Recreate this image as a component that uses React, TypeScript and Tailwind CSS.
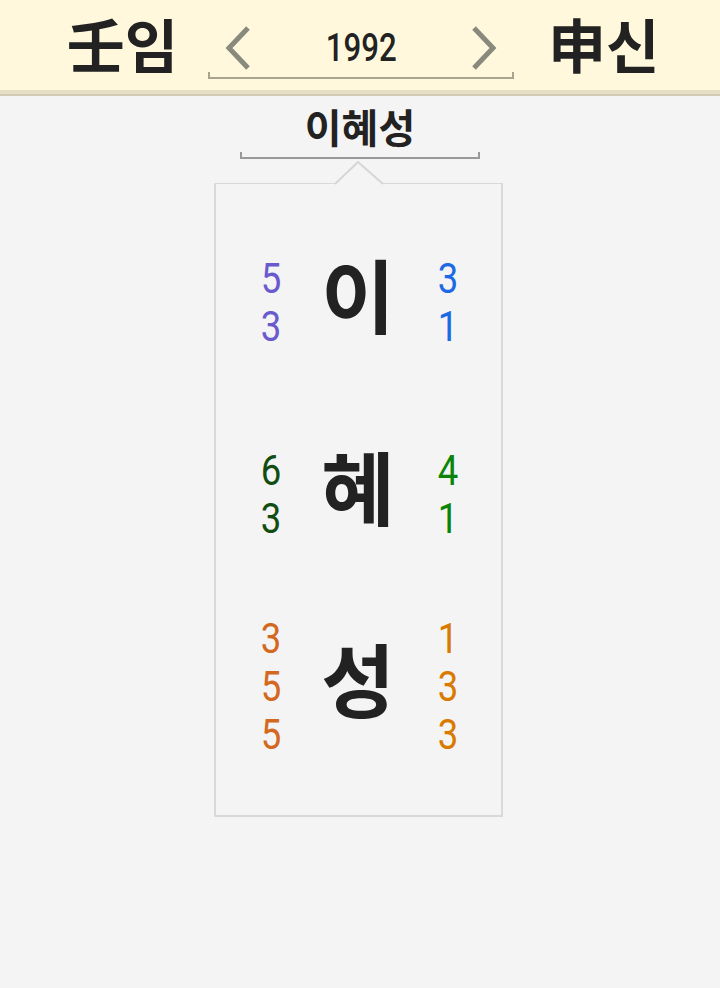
import React from "react";

const KR = { fontFamily: '"Noto Sans CJK KR", "Noto Sans", sans-serif' };
const NUM = { fontFamily: '"Roboto", "Noto Sans", sans-serif' };

// 이름 글자별 획수 (왼쪽 / 오른쪽)
const rows = [
  { ch: "이", left: ["5", "3"], right: ["3", "1"], lc: "text-[#6a5acd]", rc: "text-[#1c69e4]" },
  { ch: "혜", left: ["6", "3"], right: ["4", "1"], lc: "text-[#114d11]", rc: "text-[#0a850a]" },
  { ch: "성", left: ["3", "5", "5"], right: ["1", "3", "3"], lc: "text-[#d2691e]", rc: "text-[#d97a00]" },
];

function Chevron({ dir }: { dir: "left" | "right" }) {
  return (
    <svg width="26" height="44" viewBox="0 0 26 44">
      <polyline
        points={dir === "left" ? "23,2 4,22 23,42" : "3,2 22,22 3,42"}
        fill="none"
        stroke="#8a8a7c"
        strokeWidth="5"
      />
    </svg>
  );
}

export default function App() {
  return (
    <div className="min-h-[988px] bg-[#f4f4f4]" style={KR}>
      {/* 상단: 연도 선택 */}
      <header className="bg-[#fff8dc] border-b-[4px] border-[#e6dfc6]">
        <div className="h-[90px] flex items-center justify-center">
          <div className="text-[58px] font-bold text-[#222] leading-none pb-[4px] ml-[6px]">壬임</div>
          <div className="w-[306px] ml-[30px] mr-[34px] flex flex-col pt-[12px]">
            <div className="flex items-center justify-between px-[17px] h-[48px]">
              <Chevron dir="left" />
              <span className="inline-block scale-x-[0.82] text-[38px] font-medium text-[#222] leading-none" style={NUM}>
                1992
              </span>
              <Chevron dir="right" />
            </div>
            <div className="h-[7px] border-x-2 border-b-2 border-[#a8a48e]" />
          </div>
          <div className="text-[58px] font-bold text-[#222] leading-none pb-[4px]">申신</div>
        </div>
      </header>
      <div className="h-[2px] bg-[#d3ccb4]" />

      {/* 이름 */}
      <div className="flex flex-col items-center pt-[4px]">
        <div className="text-[40px] font-bold text-[#222] leading-[52px]">이혜성</div>
        <div className="w-[240px] h-[7px] border-x-2 border-b-2 border-[#999]" />

        {/* 획수 박스 */}
        <div className="relative mt-[24px] mr-[3px] w-[289px] border-2 border-t border-[#d9d9d9] pt-[22px] pb-[33px]">
          <svg
            className="absolute left-[117px] -top-[23px]"
            width="52"
            height="24"
            viewBox="0 0 52 24"
          >
            <polygon points="2,23 25,1 50,23" fill="#f4f4f4" />
            <polyline points="2,23 25,1 50,23" fill="none" stroke="#d6d6d6" strokeWidth="2" />
          </svg>
          {rows.map((r) => (
            <div key={r.ch} className="h-[192px] flex items-center pl-[25px]">
              <div className={`w-[60px] flex flex-col items-center text-[43px] leading-[48px] ${r.lc}`} style={NUM}>
                {r.left.map((n, i) => (
                  <span key={i} className="inline-block scale-x-[0.85]">{n}</span>
                ))}
              </div>
              <div className="w-[80px] ml-[17px] mb-[20px] text-center text-[80px] font-bold text-[#222] leading-none">
                {r.ch}
              </div>
              <div className={`w-[60px] ml-[20px] flex flex-col items-center text-[43px] leading-[48px] ${r.rc}`} style={NUM}>
                {r.right.map((n, i) => (
                  <span key={i} className="inline-block scale-x-[0.85]">{n}</span>
                ))}
              </div>
            </div>
          ))}
        </div>
      </div>
    </div>
  );
}
